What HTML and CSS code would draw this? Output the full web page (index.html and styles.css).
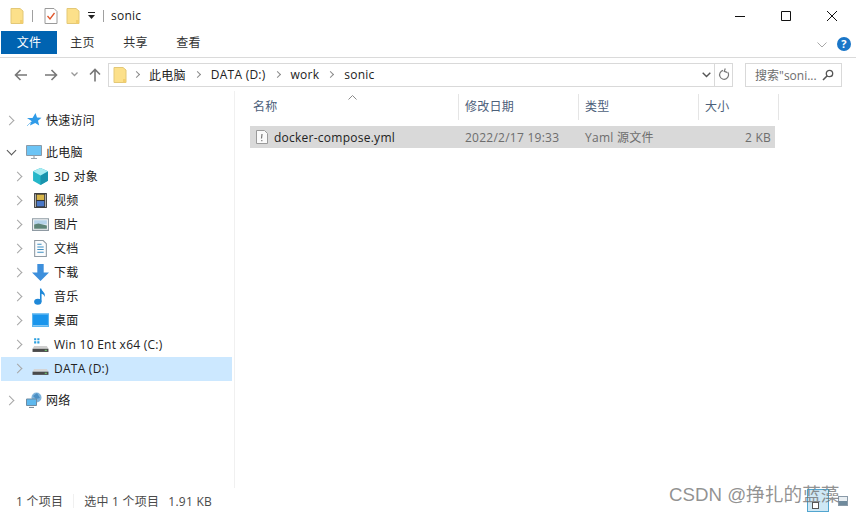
FILE: index.html
```html
<!DOCTYPE html>
<html lang="zh-CN">
<head>
  <meta charset="UTF-8">
  <title>sonic</title>
  <link rel="stylesheet" href="styles.css">
</head>
<body>
  <div class="window">
    <div class="titlebar">
      <svg class="ic-folder" width="14" height="16" viewBox="0 0 14 16"><path d="M1 .5h9l3 2.500V15.500H1z" fill="#fce08a" stroke="#e3c877"/><path d="M10 12h3v3.500h-3z" fill="#f3cf6e"/></svg>
      <span class="qa-sep"></span>
      <svg class="ic-check" width="14" height="16" viewBox="0 0 14 16"><path d="M1 .5h9l3 3V15.500H1z" fill="#fff" stroke="#9a9a9a"/><path d="M3.500 8l2.500 3 4.500-6" fill="none" stroke="#e0552a" stroke-width="1.300"/></svg>
      <svg class="ic-folder2" width="14" height="16" viewBox="0 0 14 16"><path d="M1 .5h9l3 2.500V15.500H1z" fill="#fce08a" stroke="#e3c877"/><path d="M10 12h3v3.500h-3z" fill="#f3cf6e"/></svg>
      <svg class="ic-drop" width="7" height="7" viewBox="0 0 7 7"><path d="M0 0h7v1H0z" fill="#222"/><path d="M0 3h7L3.500 7z" fill="#222"/></svg>
      <span class="qa-sep last"></span>
      <span class="title">sonic</span>
      <div class="win-btns">
        <svg width="12" height="12" viewBox="0 0 12 12"><path d="M1 6.500h10" stroke="#111"/></svg>
        <svg width="12" height="12" viewBox="0 0 12 12"><path d="M1.500 1.500h9v9h-9z" fill="none" stroke="#111"/></svg>
        <svg width="12" height="12" viewBox="0 0 12 12"><path d="M1 1l10 10M11 1L1 11" stroke="#111"/></svg>
      </div>
    </div>

    <div class="ribbon">
      <div class="tab active">文件</div>
      <div class="tab">主页</div>
      <div class="tab">共享</div>
      <div class="tab">查看</div>
      <svg class="ribbon-chev" width="10" height="6" viewBox="0 0 10 6"><path d="M.5.500L5 5 9.500.500" fill="none" stroke="#a8a8a8"/></svg>
      <div class="help">?</div>
    </div>

    <div class="navbar">
      <svg class="nav-back" width="14" height="12" viewBox="0 0 14 12"><path d="M13 6H2M6.500 1L1.500 6l5 5" fill="none" stroke="#777" stroke-width="1.600"/></svg>
      <svg class="nav-fwd" width="14" height="12" viewBox="0 0 14 12"><path d="M1 6h11M7.500 1l5 5-5 5" fill="none" stroke="#777" stroke-width="1.600"/></svg>
      <svg class="nav-down" width="7" height="5" viewBox="0 0 7 5"><path d="M.5.500l3 3 3-3" fill="none" stroke="#999" stroke-width="1.300"/></svg>
      <svg class="nav-up" width="12" height="14" viewBox="0 0 12 14"><path d="M6 13.500V2M1 6.500l5-5 5 5" fill="none" stroke="#777" stroke-width="1.600"/></svg>
      <div class="address">
        <svg class="addr-folder" width="14" height="16" viewBox="0 0 14 16"><path d="M1 .5h9l3 2.500V15.500H1z" fill="#fce08a" stroke="#e3c877"/><path d="M10 12h3v3.500h-3z" fill="#f3cf6e"/></svg>
        <span class="crumb-arrow first"></span><span class="crumb">此电脑</span>
        <span class="crumb-arrow"></span><span class="crumb">DATA (D:)</span>
        <span class="crumb-arrow"></span><span class="crumb">work</span>
        <span class="crumb-arrow"></span><span class="crumb">sonic</span>
        <svg class="addr-drop" width="9" height="6" viewBox="0 0 9 6"><path d="M.7.700L4.500 4.500 8.300.700" fill="none" stroke="#555" stroke-width="1.400"/></svg>
        <div class="refresh">
          <svg width="12" height="13" viewBox="0 0 12 13"><path d="M8.500 3A4.500 4.500 0 1 1 3.500 3M5 .5v3H8" transform="rotate(20 6 7)" fill="none" stroke="#777" stroke-width="1.200"/></svg>
        </div>
      </div>
      <div class="search">
        <span>搜索"soni...</span>
        <svg width="12" height="12" viewBox="0 0 12 12"><circle cx="7.500" cy="4.500" r="3.200" fill="none" stroke="#555" stroke-width="1.300"/><path d="M5 7L1 11" stroke="#555" stroke-width="1.600"/></svg>
      </div>
    </div>

    <div class="main">
      <div class="sidebar">
        <div class="row top quick">
          <span class="chev"></span>
          <svg width="16" height="16" viewBox="0 0 16 16"><path d="M9.500 1l1.500 4.500 4.500.300-3.500 3 1.200 4.700-4-2.600L4 13.500l1.200-4.700L1 6h5.500z" fill="#2f9be8"/><path d="M1 14l5-5" stroke="#8cc8f0"/></svg>
          <span>快速访问</span>
        </div>
        <div class="row top pc">
          <span class="chev open"></span>
          <svg width="16" height="16" viewBox="0 0 16 16"><path d="M.5 1.500h15v10H.5z" fill="#6cc4f5" stroke="#8a9aa8"/><path d="M5 14.500h6M8 11.500v3" stroke="#9aa5ae" stroke-width="1.200"/></svg>
          <span>此电脑</span>
        </div>
        <div class="row child">
          <span class="chev"></span>
          <svg width="16" height="16" viewBox="0 0 16 16"><path d="M8 0l7 3v9l-7 4-7-4V3z" fill="#25b7c9"/><path d="M8 7l7-4v9l-7 4z" fill="#1a93ad"/><path d="M8 0l7 3-7 4-7-4z" fill="#a8ecf2"/></svg>
          <span>3D 对象</span>
        </div>
        <div class="row child">
          <span class="chev"></span>
          <svg width="16" height="16" viewBox="0 0 16 16"><path d="M2 1h12v14H2z" fill="#333"/><path d="M4.500 2.500h7v5h-7z" fill="#d8b64a"/><path d="M4.500 8.500h7v5h-7z" fill="#4a78c8"/><path d="M3 2h.8v12H3zM12.200 2h.8v12h-.8z" fill="#ccc"/></svg>
          <span>视频</span>
        </div>
        <div class="row child">
          <span class="chev"></span>
          <svg width="16" height="16" viewBox="0 0 16 16"><path d="M.5 2.500h15v11H.5z" fill="#f2f5f7" stroke="#8f9aa3"/><path d="M2 4h12v4H2z" fill="#b5d3ea"/><path d="M2 8l4-1 8 2v3H2z" fill="#5d8478"/></svg>
          <span>图片</span>
        </div>
        <div class="row child">
          <span class="chev"></span>
          <svg width="16" height="16" viewBox="0 0 16 16"><path d="M2.500.5h8l3 3v12h-11z" fill="#fbfcfd" stroke="#8f9aa3"/><path d="M5 4h4M5 6.500h6M5 9h6M5 11.500h6" stroke="#3f8fc4"/></svg>
          <span>文档</span>
        </div>
        <div class="row child">
          <span class="chev"></span>
          <svg width="16" height="16" viewBox="0 0 16 16"><path d="M5 0h6v8h5l-8 8-8-8h5z" fill="#3d8fdc"/></svg>
          <span>下载</span>
        </div>
        <div class="row child">
          <span class="chev"></span>
          <svg width="16" height="16" viewBox="0 0 16 16"><ellipse cx="5.500" cy="13" rx="3.500" ry="2.800" fill="#1e88d8"/><path d="M7.500 13V.5h1.200c.5 3 4.300 3.500 3.300 8-.5-2-2.500-3-3-3V13z" fill="#1e88d8"/></svg>
          <span>音乐</span>
        </div>
        <div class="row child">
          <span class="chev"></span>
          <svg width="16" height="16" viewBox="0 0 16 16"><path d="M0 1.500h16v12.500H0z" fill="#1a95ec"/><path d="M1 13h14" stroke="#bfe2f8"/><path d="M.5 2h15v11.500H.5z" fill="none" stroke="#5cb5ef"/></svg>
          <span>桌面</span>
        </div>
        <div class="row child">
          <span class="chev"></span>
          <svg width="16" height="16" viewBox="0 0 16 16"><path d="M2 2h2v2H2zM5 2h2v2H5zM2 5h2v2H2zM5 5h2v2H5z" fill="#2a9fe0"/><path d="M2 9.500h12l1.500 2.500H.5z" fill="#cfcfcf"/><path d="M.5 12h15v3H.5z" fill="#4a4a4a"/><path d="M12 13h2v1h-2z" fill="#6fd06f"/></svg>
          <span>Win 10 Ent x64 (C:)</span>
        </div>
        <div class="row child selected">
          <span class="chev"></span>
          <svg width="16" height="16" viewBox="0 0 16 16"><path d="M2 8.500h12l1.500 2.500H.5z" fill="#d5d5d5"/><path d="M.5 11h15v3H.5z" fill="#4a4a4a"/><path d="M12 12h2v1h-2z" fill="#6fd06f"/></svg>
          <span>DATA (D:)</span>
        </div>
        <div class="row top net">
          <span class="chev"></span>
          <svg width="16" height="16" viewBox="0 0 16 16"><circle cx="10.500" cy="5.500" r="5" fill="#7fb4dc"/><path d="M7 4l4-3 3 5-4 1z" fill="#4b8fc4"/><path d="M.5 7h10v6.500H.5z" fill="#5db8ee" stroke="#6d8ba3"/><path d="M3 15.500h5" stroke="#7d8d9a" stroke-width="1.200"/></svg>
          <span>网络</span>
        </div>
      </div>

      <div class="content">
        <svg class="sort-caret" width="9" height="5" viewBox="0 0 9 5"><path d="M.5 4.500l4-4 4 4" fill="none" stroke="#8a8a8a"/></svg>
        <div class="cols header">
          <div class="col c-name">名称</div>
          <div class="col c-date">修改日期</div>
          <div class="col c-type">类型</div>
          <div class="col c-size">大小</div>
        </div>
        <div class="file-row">
          <div class="c-name file-name">
            <svg width="12" height="14" viewBox="0 0 12 14"><path d="M.5.500h8l3 3v10H.5z" fill="#fafafa" stroke="#9a9a9a"/><path d="M6 4L5.500 8.500" stroke="#777" stroke-width="1.200"/><path d="M5.200 10h1.200v1.200H5.200z" fill="#777"/></svg>
            <span>docker-compose.yml</span>
          </div>
          <div class="c-date cell">2022/2/17 19:33</div>
          <div class="c-type cell">Yaml 源文件</div>
          <div class="c-size cell size">2 KB</div>
        </div>
      </div>
    </div>

    <div class="statusbar">
      <span>1 个项目</span>
      <span class="status-sep"></span>
      <span>选中 1 个项目</span>
      <span class="status-size">1.91 KB</span>
    </div>
  </div>

  <div class="view-btn details"></div>
  <div class="view-btn tiles"></div>
  <div class="watermark">CSDN @挣扎的蓝藻</div>
</body>
</html>
```

FILE: styles.css
```css
* {
  box-sizing: border-box;
}
html, body {
  margin: 0;
  height: 100%;
  overflow: hidden;
}
body {
  font-family: "Open Sans", "Noto Sans CJK SC", sans-serif;
  font-size: 12px;
  letter-spacing: 0.25px;
  color: #1a1a1a;
  background: #fff;
}
svg {
  display: block;
  flex: none;
}
.window {
  width: 856px;
  height: 514px;
  display: flex;
  flex-direction: column;
}

/* title bar */
.titlebar {
  height: 31px;
  display: flex;
  align-items: center;
  padding-left: 10px;
}
.qa-sep {
  width: 1px;
  height: 12px;
  background: #a0a0a0;
  margin: 0 11px 0 8px;
}
.qa-sep.last {
  margin: 0 7px 0 8px;
}
.ic-folder2 {
  margin-left: 8px;
}
.ic-drop {
  margin-left: 8px;
}
.win-btns {
  margin-left: auto;
  display: flex;
  gap: 34px;
  padding-right: 18px;
}

/* ribbon tabs */
.ribbon {
  height: 27px;
  display: flex;
  align-items: flex-start;
  padding-left: 1px;
  border-bottom: 1px solid #dadada;
}
.tab {
  width: 53px;
  height: 23px;
  line-height: 24px;
  text-align: center;
  color: #333;
}
.tab.active {
  width: 56px;
  margin-right: -1px;
  background: #0063b1;
  color: #fff;
}
.ribbon-chev {
  margin: 11px 0 0 auto;
}
.help {
  width: 14px;
  height: 14px;
  margin: 6px 5px 0 10px;
  border-radius: 50%;
  background: #1a76c8;
  color: #fff;
  font-size: 11px;
  font-weight: bold;
  line-height: 14px;
  text-align: center;
}

/* nav bar */
.navbar {
  height: 33px;
  display: flex;
  align-items: center;
  padding: 0 14px;
}
.nav-fwd {
  margin-left: 16px;
}
.nav-down {
  margin-left: 13px;
}
.nav-up {
  margin-left: 11px;
}
.address {
  width: 626px;
  height: 24px;
  margin-left: 7px;
  border: 1px solid #d9d9d9;
  display: flex;
  align-items: center;
  padding-left: 4px;
}
.crumb-arrow {
  width: 5px;
  height: 5px;
  border-top: 1px solid #8a8a8a;
  border-right: 1px solid #8a8a8a;
  transform: rotate(45deg);
  margin: 0 11px 0 9px;
}
.crumb-arrow.first {
  margin: 0 10px 0 7px;
}
.crumb {
  color: #222;
}
.addr-drop {
  margin-left: auto;
  margin-right: 3px;
}
.refresh {
  width: 18px;
  height: 22px;
  border-left: 1px solid #d9d9d9;
  display: flex;
  align-items: center;
  justify-content: center;
}
.search {
  width: 97px;
  height: 24px;
  margin-left: 12px;
  border: 1px solid #d9d9d9;
  display: flex;
  align-items: center;
  justify-content: space-between;
  padding: 0 7px 0 9px;
  color: #6d6d6d;
  white-space: nowrap;
  letter-spacing: 0;
}

/* main area */
.main {
  flex: 1;
  display: flex;
  min-height: 0;
}
.sidebar {
  width: 235px;
  border-right: 1px solid #f0f0f0;
  padding: 0 2px 0 1px;
}
.row {
  height: 24px;
  display: flex;
  align-items: center;
  gap: 4px;
  padding-bottom: 2px;
  color: #222;
}
.row.quick {
  margin-top: 18px;
}
.row.pc {
  margin-top: 8px;
}
.row.net {
  margin-top: 8px;
}
.row.top {
  padding-left: 5px;
}
.row.top .chev {
  margin-right: 6px;
}
.row.child {
  padding-left: 13px;
  gap: 5px;
}
.row.child .chev {
  margin-right: 3px;
}
.row.child svg {
  width: 17px;
  height: 17px;
}
.row.selected {
  background: #cce8ff;
}
.chev {
  width: 10px;
  height: 10px;
  position: relative;
}
.chev::before {
  content: "";
  position: absolute;
  left: 0;
  top: 2px;
  width: 6px;
  height: 6px;
  border-top: 1.500px solid #a6a6a6;
  border-right: 1.500px solid #a6a6a6;
  transform: rotate(45deg);
}
.chev.open::before {
  left: 2px;
  top: 0;
  border-color: #555;
  transform: rotate(135deg);
}

/* file list */
.content {
  flex: 1;
  position: relative;
  padding-left: 15px;
}
.sort-caret {
  position: absolute;
  left: 113px;
  top: 4px;
}
.cols {
  display: flex;
  height: 26px;
  margin-top: 3px;
}
.col {
  padding-left: 6px;
  line-height: 26px;
  color: #4c607a;
  border-right: 1px solid #e5e5e5;
}
.col.c-name {
  padding-left: 3px;
}
.c-name {
  width: 209px;
}
.c-date {
  width: 120px;
}
.c-type {
  width: 120px;
}
.c-size {
  width: 80px;
}
.file-row {
  width: 525px;
  height: 22px;
  margin-top: 6px;
  background: #d9d9d9;
  display: flex;
  align-items: center;
}
.file-name {
  display: flex;
  align-items: center;
  gap: 6px;
  padding-left: 6px;
  width: 208px;
  color: #222;
}
.cell {
  padding-left: 7px;
  color: #6d6d6d;
  white-space: nowrap;
}
.cell.size {
  width: 77px;
  padding: 0 4px 0 0;
  text-align: right;
}

/* status bar */
.statusbar {
  height: 26px;
  display: flex;
  align-items: center;
  padding-left: 16px;
  color: #4a4a4a;
}
.status-sep {
  width: 1px;
  height: 14px;
  background: #f0f0f0;
  margin: 0 10px;
}
.status-size {
  margin-left: 9px;
}

/* overlays in the corner */
.view-btn {
  position: absolute;
  border: 1px solid #52a5cf;
}
.view-btn.details {
  left: 807px;
  top: 489px;
  width: 22px;
  height: 23px;
  background: #cfe8f5;
}
.view-btn.details::after {
  content: "";
  position: absolute;
  left: 4px;
  top: 12px;
  width: 5px;
  height: 5px;
  border: 1px solid #555;
  background: #fff;
}
.view-btn.tiles {
  left: 838px;
  top: 496px;
  width: 10px;
  height: 10px;
  border-color: #8a9aa8;
  background: linear-gradient(#e8eef2 50%, #6f8a9c 50%);
}
.watermark {
  position: absolute;
  left: 669px;
  top: 484px;
  font-family: "Liberation Sans", "Noto Sans CJK SC", sans-serif;
  font-size: 18.7px;
  letter-spacing: 0;
  line-height: 22px;
  color: rgba(110, 110, 110, 0.75);
  white-space: nowrap;
}
```
